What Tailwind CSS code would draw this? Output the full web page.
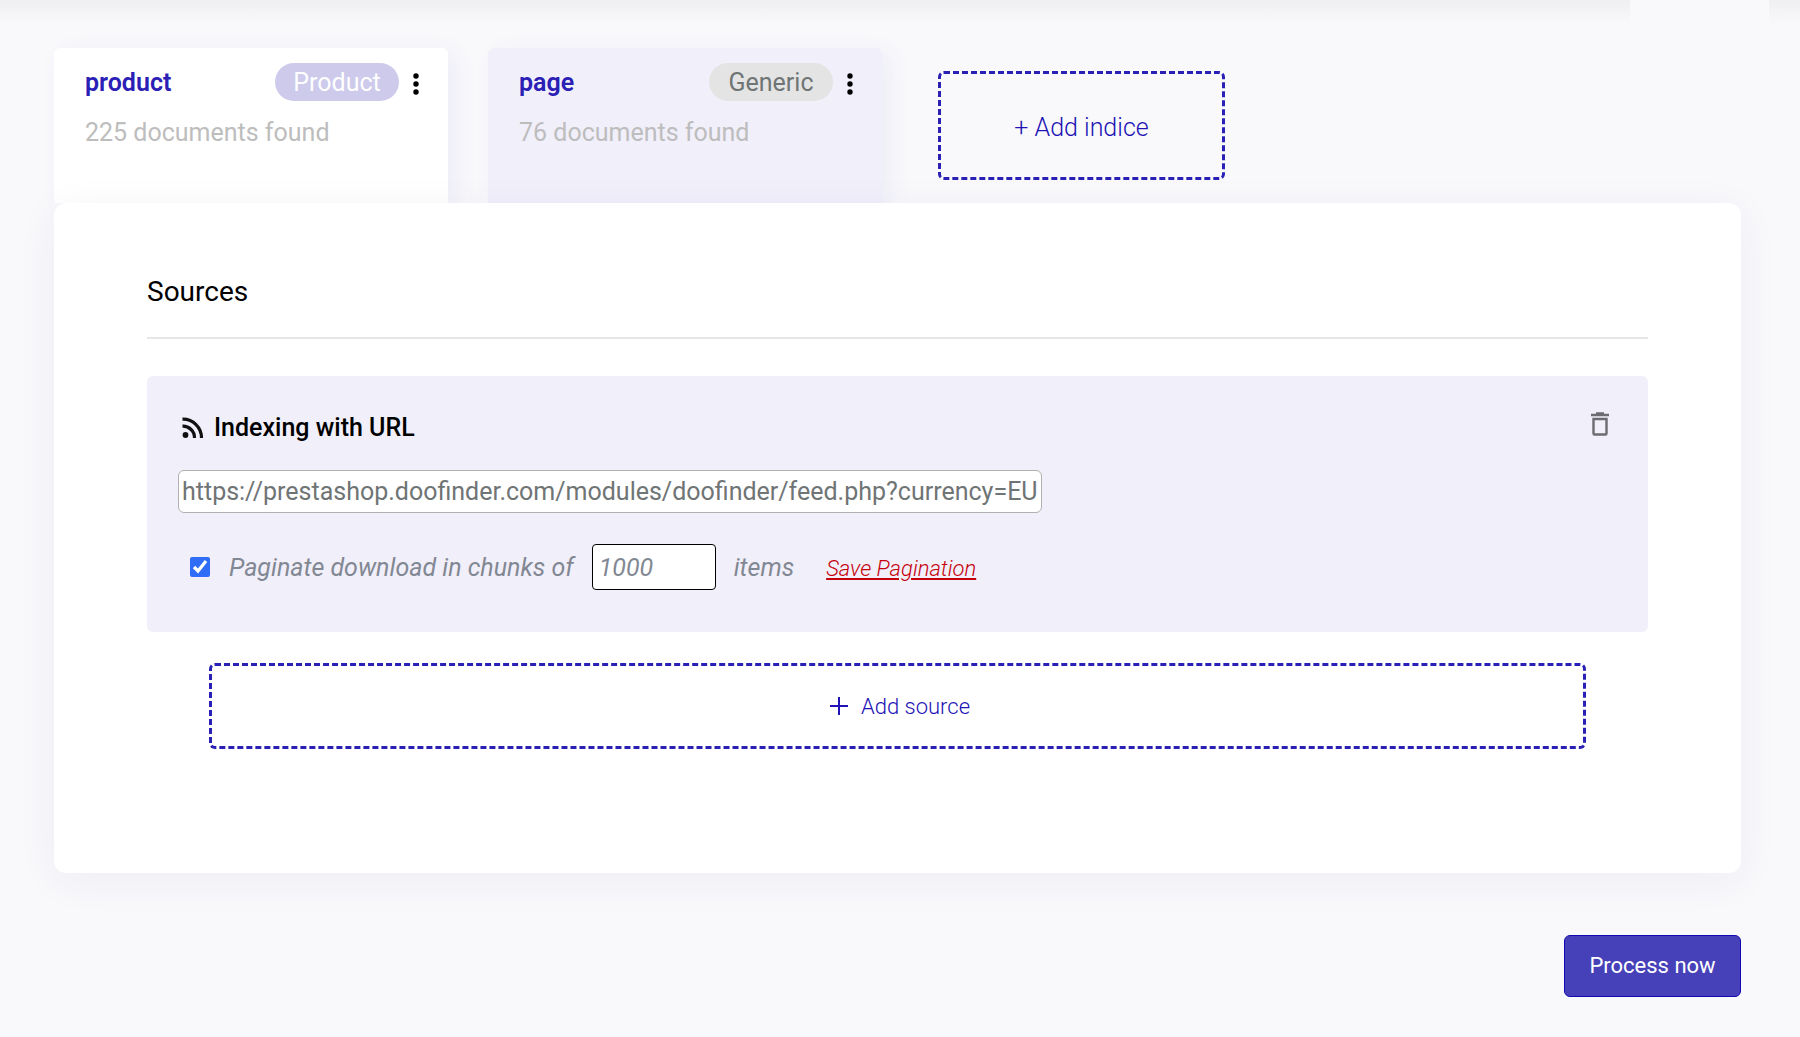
<!DOCTYPE html>
<html lang="en">
<head>
<meta charset="utf-8">
<meta name="viewport" content="width=device-width, initial-scale=1">
<title>Indices</title>
<script src="https://cdn.jsdelivr.net/npm/@tailwindcss/browser@4"></script>
</head>
<body class="min-h-screen bg-[#f9f9fc] font-[Roboto,sans-serif] text-[25px] leading-8 text-black">
<div class="flex h-6" aria-hidden="true">
  <div class="flex-1 bg-linear-to-b from-[#efeff1] to-[#f9f9fc]"></div>
  <div class="w-[139px]"></div>
  <div class="w-[31px] bg-linear-to-b from-[#efeff1] to-[#f9f9fc]"></div>
</div>
<main class="pt-6 pr-[59px] pl-[54px]">
  <nav class="flex" aria-label="Indices">
    <section class="mr-10 h-[155px] w-[394px] rounded-t-md bg-white pt-[15px] pr-7 pl-[31px] shadow-[8px_4px_24px_rgba(40,30,150,0.06)]">
      <div class="flex items-center">
        <a href="#product" class="flex-1 pt-0.5 font-semibold text-[#2a20b5]">product</a>
        <span class="flex h-[38px] w-[124px] items-center justify-center rounded-full bg-[#cdcaeb] pt-0.5 text-white">Product</span>
        <button type="button" aria-label="Product options" class="ml-[13px] pt-1">
          <svg class="h-6 w-2" viewBox="0 0 8 24" aria-hidden="true"><circle cx="4" cy="4" r="2.7"/><circle cx="4" cy="12" r="2.7"/><circle cx="4" cy="20" r="2.7"/></svg>
        </button>
      </div>
      <p class="mt-4 text-[#bdbdbd]">225 documents found</p>
    </section>
    <section class="h-[155px] w-[394px] rounded-t-md bg-[#f1effa] pt-[15px] pr-7 pl-[31px] shadow-[8px_4px_24px_rgba(40,30,150,0.06)]">
      <div class="flex items-center">
        <a href="#page" class="flex-1 pt-0.5 font-semibold text-[#2a20b5]">page</a>
        <span class="flex h-[38px] w-[124px] items-center justify-center rounded-full bg-[#e4e4e4] pt-0.5 text-[#6f7475]">Generic</span>
        <button type="button" aria-label="Page options" class="ml-[13px] pt-1">
          <svg class="h-6 w-2" viewBox="0 0 8 24" aria-hidden="true"><circle cx="4" cy="4" r="2.7"/><circle cx="4" cy="12" r="2.7"/><circle cx="4" cy="20" r="2.7"/></svg>
        </button>
      </div>
      <p class="mt-4 text-[#bdbdbd]">76 documents found</p>
    </section>
    <button type="button" class="mt-[23px] ml-14 h-[109px] w-[287px] rounded-md border-3 border-dashed border-[#2a20b5] pt-1 font-light text-[#2113b5]">+ Add indice</button>
  </nav>

  <section class="relative rounded-xl bg-white px-[93px] pt-[73px] pb-[124px] shadow-[0_8px_40px_rgba(40,30,110,0.06)]">
    <h1 class="border-b-2 border-[#e6e6e6] pb-[29px] text-[28px] leading-8">Sources</h1>
    <div class="mt-[37px] flex h-64 items-start rounded-md bg-[#f1effa] pt-9 pr-9 pl-[31px]">
      <div class="flex-1">
        <h2 class="flex items-center font-medium">
          <svg class="mr-2 ml-1 size-6" viewBox="0 0 24 24" fill="none" stroke="#111" stroke-width="3.2" aria-hidden="true"><path d="M0.500 3.200A18.500 18.500 0 0 1 19.500 22M0.500 10.200A11.500 11.500 0 0 1 12.500 22"/><circle cx="3.500" cy="19" r="2.900" fill="#111" stroke="none"/></svg>
          Indexing with URL
        </h2>
        <input type="text" aria-label="Feed URL" value="https://prestashop.doofinder.com/modules/doofinder/feed.php?currency=EUR&amp;language=en" class="mt-[26px] block h-[43px] w-[864px] rounded-md border border-[#b0b0b0] bg-white px-[3px] text-[#6f7475]">
        <div class="mt-[31px] ml-3 flex items-center italic text-[#828893]">
          <input id="paginate" type="checkbox" checked class="mr-[19px] size-5 accent-[#2f6df6]">
          <label for="paginate" class="mr-[18px] pt-0.5">Paginate download in chunks of</label>
          <input id="chunk" type="text" value="1000" class="mr-[18px] h-[46px] w-[124px] rounded-sm border border-black bg-white px-[6px] italic">
          <label for="chunk" class="pt-0.5">items</label>
          <a href="#save" class="ml-8 pt-1 text-[22px] font-light text-[#c5000b] underline">Save Pagination</a>
        </div>
      </div>
      <button type="button" aria-label="Delete source">
        <svg class="h-6 w-6" viewBox="0 0 24 24" fill="none" stroke="#6b6b72" stroke-width="2.4" aria-hidden="true"><path d="M3 3h18M8 1.400h8M5.500 7h13v14.500q0 1-1 1h-11q-1 0-1-1z"/></svg>
      </button>
    </div>
    <div class="mt-[31px] px-[62px]">
      <button type="button" class="flex h-[86px] w-full items-center justify-center rounded-md border-3 border-dashed border-[#2a20b5] pl-1 text-[22px] font-light text-[#2113b5]">
        <svg class="mr-3 size-5" viewBox="0 0 20 20" fill="none" stroke="currentColor" stroke-width="2" aria-hidden="true"><path d="M1 10h18M10 1v18"/></svg>
        <span class="pt-0.5">Add source</span>
      </button>
    </div>
  </section>
  <div class="flex justify-end pt-[62px] pb-9">
    <button type="button" class="h-[62px] w-[177px] rounded-md border border-[#1408b0] bg-[#4741b9] text-[22px] text-white">Process now</button>
  </div>
</main>
</body>
</html>
